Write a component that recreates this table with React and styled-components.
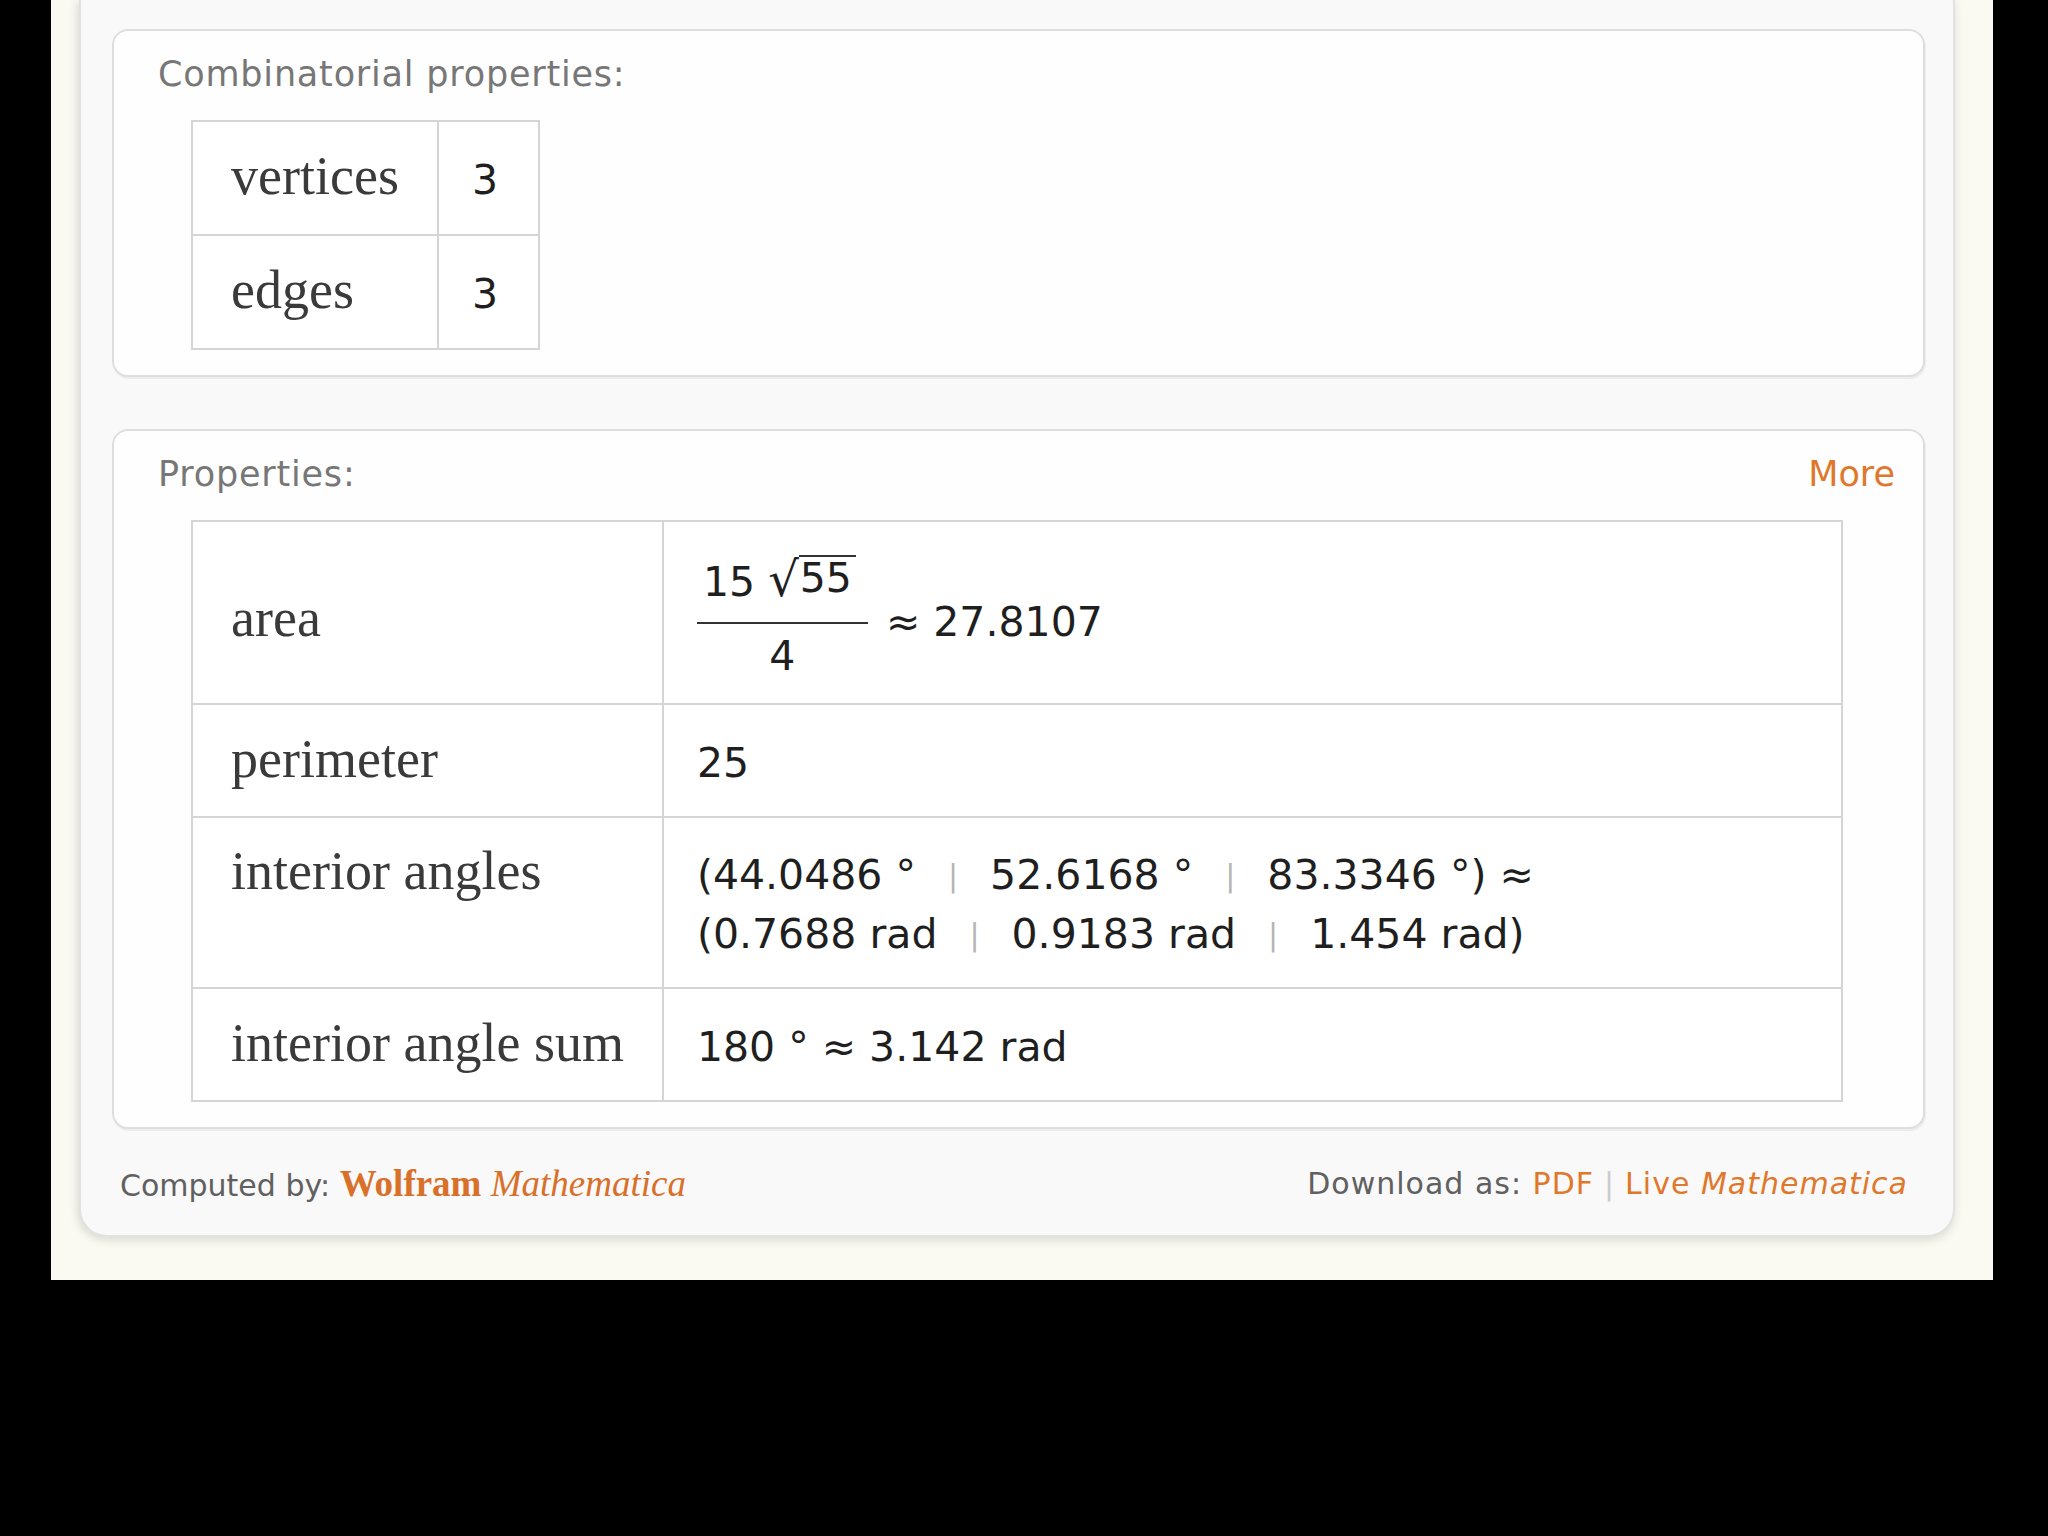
import React from 'react'
import styled, { createGlobalStyle } from 'styled-components'

const GlobalStyle = createGlobalStyle`
  html, body {
    margin: 0;
    background: #000;
  }
`

const combinatorial = [
    { name: 'vertices', value: '3' },
    { name: 'edges', value: '3' },
]

function Angles({ items, unit }) {
    return (
        <>
            {items.map((v, i) => (
                <React.Fragment key={v}>
                    {i > 0 && <Sep>|</Sep>}
                    <span>{i === 0 ? '(' : ''}{v}{unit}</span>
                </React.Fragment>
            ))}
        </>
    )
}

function App() {
    return (
        <Page>
            <GlobalStyle />
            <Panel>
                <Pod>
                    <PodHeader>
                        <Label>Combinatorial properties:</Label>
                    </PodHeader>
                    <TableWrap>
                        <Grid $padTop={28} $padBottom={24}>
                            <tbody>
                                {combinatorial.map(row => (
                                    <tr key={row.name}>
                                        <Key>{row.name}</Key>
                                        <Value $narrow>{row.value}</Value>
                                    </tr>
                                ))}
                            </tbody>
                        </Grid>
                    </TableWrap>
                </Pod>

                <Pod>
                    <PodHeader>
                        <Label>Properties:</Label>
                        <More href="#">More</More>
                    </PodHeader>
                    <TableWrap $right={52}>
                        <Grid $full $padTop={28} $padBottom={23}>
                            <tbody>
                                <tr>
                                    <Key>area</Key>
                                    <Value>
                                        <Frac>
                                            <Numerator>
                                                15&nbsp;<Radical><RadSign>√</RadSign><Radicand>55</Radicand></Radical>
                                            </Numerator>
                                            <FracBar />
                                            <Denominator>4</Denominator>
                                        </Frac>
                                        ≈ 27.8107
                                    </Value>
                                </tr>
                                <tr>
                                    <Key>perimeter</Key>
                                    <Value>25</Value>
                                </tr>
                                <tr>
                                    <Key>interior angles</Key>
                                    <Value>
                                        <Line>
                                            <Angles items={['44.0486', '52.6168', '83.3346']} unit=" °" />
                                            <span>) ≈</span>
                                        </Line>
                                        <Line>
                                            <Angles items={['0.7688', '0.9183', '1.454']} unit=" rad" />
                                            <span>)</span>
                                        </Line>
                                    </Value>
                                </tr>
                                <tr>
                                    <Key>interior angle sum</Key>
                                    <Value>180 ° ≈ 3.142 rad</Value>
                                </tr>
                            </tbody>
                        </Grid>
                    </TableWrap>
                </Pod>

                <Footer>
                    <div>
                        Computed by: <Brand><b>Wolfram</b> <i>Mathematica</i></Brand>
                    </div>
                    <Downloads>
                        Download as: <Link href="#">PDF</Link>
                        <FooterSep>|</FooterSep>
                        <Link href="#">Live <i>Mathematica</i></Link>
                    </Downloads>
                </Footer>
            </Panel>
        </Page>
    )
}

export default App

const Page = styled.div`
    margin-left: 51px;
    width: 1942px;
    height: 1280px;
    background: #fbfaf2;
    overflow: hidden;
`

const Panel = styled.section`
    margin-left: 28px;
    width: 1876px;
    box-sizing: border-box;
    padding: 29px 28px 0 31px;
    background: #f9f9f9;
    border: 2px solid #e2e2e2;
    border-top: none;
    border-radius: 0 0 28px 28px;
    box-shadow: 0 4px 10px rgba(0, 0, 0, 0.1), -4px 0 10px rgba(0, 0, 0, 0.05);
`

const Pod = styled.div`
    background: #fefefe;
    border: 2px solid #dedede;
    border-radius: 16px;
    padding: 23px 28px 25px 44px;
    box-shadow: 1px 2px 0 #ececec;

    & + & {
        margin-top: 52px;
    }
`

const PodHeader = styled.div`
    display: flex;
    justify-content: space-between;
    align-items: center;
    line-height: 40px;
`

const Label = styled.span`
    font-family: "DejaVu Sans", Verdana, sans-serif;
    font-size: 35px;
    letter-spacing: 0.8px;
    color: #777;
`

const More = styled.a`
    font-family: "DejaVu Sans", Verdana, sans-serif;
    font-size: 35px;
    color: #e0782c;
    text-decoration: none;
`

const TableWrap = styled.div`
    margin-top: 26px;
    padding: 0 ${props => props.$right || 0}px 0 33px;
`

const Grid = styled.table`
    border-collapse: collapse;
    width: ${props => (props.$full ? '100%' : 'auto')};
    background: #fff;

    td {
        border: 2px solid #d5d5d5;
        padding: ${props => props.$padTop}px 38px ${props => props.$padBottom}px;
        vertical-align: baseline;
    }

    ${props => props.$full && 'td:first-child { width: 1%; }'}
`

const Key = styled.td`
    white-space: nowrap;
    font-family: "Liberation Serif", "Times New Roman", serif;
    font-size: 54px;
    line-height: 48px;
    color: #3a3a3a;
`

const Value = styled.td`
    font-family: "DejaVu Sans", Verdana, sans-serif;
    font-size: 41px;
    line-height: 60px;
    color: #1f1f1f;
    white-space: nowrap;

    && {
        padding-left: 33px;
        padding-right: ${props => (props.$narrow ? '40px' : '38px')};
    }
`

const Line = styled.div`
    display: flex;
    line-height: 59px;
`

const Sep = styled.span`
    color: #b5b5b5;
    font-size: 30px;
    margin: 0 32px;
`

const Frac = styled.span`
    display: inline-flex;
    flex-direction: column;
    align-items: center;
    vertical-align: 40px;
    margin-right: 18px;
`

const Numerator = styled.span`
    line-height: 64px;
    padding: 0 12px 0 6px;
`

const Denominator = styled.span`
    line-height: 48px;
`

const FracBar = styled.span`
    align-self: stretch;
    height: 2px;
    margin: 8px 0;
    background: #333;
`

const Radical = styled.span`
    display: inline-flex;
    align-items: flex-end;
`

const RadSign = styled.span`
    font-size: 48px;
    line-height: 48px;
`

const Radicand = styled.span`
    display: inline-block;
    line-height: 42px;
    margin-bottom: 4px;
    border-top: 2px solid #333;
    padding: 0 4px 0 1px;
`

const Footer = styled.footer`
    display: flex;
    justify-content: space-between;
    margin: 0 17px 0 8px;
    padding: 35px 0 29px;
    line-height: 40px;
    font-family: "DejaVu Sans", Verdana, sans-serif;
    font-size: 30px;
    color: #606060;
`

const Downloads = styled.div`
    letter-spacing: 1px;
`

const Brand = styled.span`
    font-family: "Liberation Serif", "Times New Roman", serif;
    font-size: 37px;
    letter-spacing: 0;
    color: #d9702a;
`

const Link = styled.a`
    color: #e0782c;
    text-decoration: none;
`

const FooterSep = styled.span`
    color: #ccc;
    margin: 0 10px;
`
